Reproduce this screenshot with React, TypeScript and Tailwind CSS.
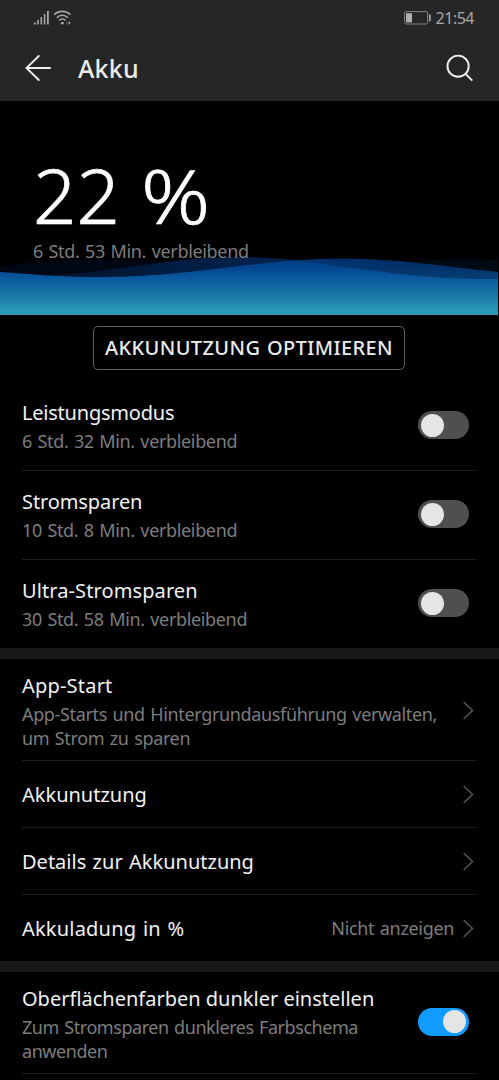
import React, { useState } from 'react';

interface SwitchProps {
  checked: boolean;
  onChange: () => void;
  label: string;
}

const Switch: React.FC<SwitchProps> = ({ checked, onChange, label }) => (
  <button
    type="button"
    role="switch"
    aria-checked={checked}
    aria-label={label}
    onClick={onChange}
    className={`flex h-7 w-[51px] shrink-0 items-center rounded-full px-[3px] ${
      checked ? 'justify-end bg-[#109cff]' : 'justify-start bg-[#4f4f4f]'
    }`}
  >
    <span className="size-[23px] rounded-full bg-[#e5e5e5]" />
  </button>
);

const Chevron: React.FC = () => (
  <svg className="h-[19px] w-3 shrink-0" viewBox="0 0 12 19" fill="none" stroke="#505050" strokeWidth="1.6">
    <path d="M1.7 1.2 L10.5 9.5 L1.7 17.8" />
  </svg>
);

const StatusBar: React.FC = () => (
  <div className="flex h-9 items-center justify-between pl-[33px] pr-[25px]">
    <div className="flex items-center gap-1 pb-px">
      <svg className="h-4 w-[17px]" viewBox="0 0 17 16" fill="#a8a8a8">
        <rect x="1" y="12.5" width="1.8" height="2" />
        <rect x="4.2" y="10" width="1.6" height="4.5" />
        <rect x="7.5" y="7" width="1.6" height="7.5" />
        <rect x="10.8" y="4" width="1.6" height="10.5" />
        <rect x="14" y="0.8" width="1.8" height="13.7" />
      </svg>
      <svg className="h-4 w-[18px]" viewBox="0 0 18 16" fill="none" stroke="#a8a8a8" strokeWidth="1.6">
        <path d="M0.2 4.8 C4.6 0.2 12 0.2 16.4 4.8" />
        <path d="M2.8 7.7 C6 4.5 10.6 4.5 13.8 7.7" />
        <path d="M5.2 10.4 C7.1 8.5 9.6 8.5 11.4 10.4" />
        <circle cx="8.3" cy="13.2" r="1.4" fill="#a8a8a8" stroke="none" />
        <path d="M13.3 11.4 L11.8 13 L13.3 14.6 Z" fill="#606060" stroke="none" />
        <path d="M14.6 11 L16.6 13 L14.6 15 Z" fill="#a8a8a8" stroke="none" />
      </svg>
    </div>
    <div className="flex items-center gap-[5px]">
      <svg className="h-[14px] w-[27px]" viewBox="0 0 27 14">
        <rect x="0.6" y="0.6" width="23" height="12.4" rx="1.6" fill="none" stroke="#858585" strokeWidth="1" />
        <rect x="2" y="2.2" width="6" height="9.2" fill="#b0b0b0" />
        <rect x="25" y="3.4" width="1.7" height="7" fill="#a8a8a8" />
      </svg>
      <span className="text-base leading-5 tracking-[-0.5px] text-[#a8a8a8]">21:54</span>
    </div>
  </div>
);

const Header: React.FC = () => (
  <header className="h-[101px] bg-[#262626]">
    <StatusBar />
    <div className="flex h-[65px] items-center px-[25px]">
      <svg className="mb-px h-[26px] w-[26px]" viewBox="0 0 26 26" fill="none" stroke="#f0f0f0" strokeWidth="1.8" strokeLinecap="round" strokeLinejoin="round">
        <path d="M13.8 1 L1.5 13 L13.8 25" />
        <path d="M1.5 13 H25.2" />
      </svg>
      <h1 className="ml-[27px] text-[25px] font-medium tracking-[0.2px] text-[#ececec]">Akku</h1>
      <svg className="mb-px ml-auto h-[28px] w-[28px]" viewBox="0 0 28 28" fill="none" stroke="#f0f0f0" strokeWidth="1.9">
        <circle cx="12.1" cy="12.2" r="10.6" />
        <path d="M19.4 19.6 L26.3 26.6" />
      </svg>
    </div>
  </header>
);

const BatteryLevel: React.FC = () => (
  <section className="relative h-[214px]">
    <svg className="absolute bottom-0 left-0 h-[60px] w-[498px]" viewBox="0 0 498 60">
      <defs>
        <linearGradient id="front" gradientUnits="userSpaceOnUse" x1="0" y1="0" x2="0" y2="60">
          <stop offset="0" stopColor="#003c82" />
          <stop offset="0.22" stopColor="#04468f" />
          <stop offset="0.4" stopColor="#0b5a9e" />
          <stop offset="0.7" stopColor="#1b7aa6" />
          <stop offset="0.93" stopColor="#2799b8" />
          <stop offset="1" stopColor="#3197b6" />
        </linearGradient>
        <linearGradient id="middle" gradientUnits="userSpaceOnUse" x1="50" y1="0" x2="300" y2="0">
          <stop offset="0" stopColor="#00132b" />
          <stop offset="0.5" stopColor="#001d42" />
          <stop offset="1" stopColor="#002352" />
        </linearGradient>
        <linearGradient id="shade" gradientUnits="userSpaceOnUse" x1="290" y1="0" x2="498" y2="0">
          <stop offset="0" stopColor="#001c44" stopOpacity="0.3" />
          <stop offset="0.5" stopColor="#001c44" stopOpacity="0.5" />
          <stop offset="1" stopColor="#001c38" stopOpacity="0.4" />
        </linearGradient>
      </defs>
      <path d="M0 12 C30 6 75 4 120 5 C170 6 200 10 240 20 H0 Z" fill="#000714" />
      <path d="M380 12 C410 5 450 3 498 5 V20 H380 Z" fill="#000a14" />
      <path d="M45 20.5 C120 17 170 2 235 2 C262 2 285 4 305 6 V22 H60 Z" fill="url(#middle)" />
      <path d="M0 17 C40 20 70 22 100 22 C190 22 260 3.8 340 3.8 C400 3.8 445 12 498 17 V60 H0 Z" fill="url(#front)" />
      <path d="M290 5.5 C306 4.2 323 3.8 340 3.8 C400 3.8 445 12 498 17 V24 C410 25 370 13 290 5.5 Z" fill="url(#shade)" />
    </svg>
    <div className="relative pl-[33px] pt-[55px]">
      <div className="flex text-[76px] font-light leading-[78px] text-white [-webkit-text-stroke:0.7px_#fff]">
        <span className="whitespace-pre">22 </span>
        <span className="ml-px origin-left scale-x-[1.12]">%</span>
      </div>
      <div className="mt-[3px] text-lg leading-7 tracking-[-0.33px] [word-spacing:1.2px] text-[#7d7d7d]">6 Std. 53 Min. verbleibend</div>
    </div>
  </section>
);

interface RowTextProps {
  title: string;
  description?: string;
  titleClass?: string;
  descriptionClass?: string;
}

const RowText: React.FC<RowTextProps> = ({ title, description, titleClass = '', descriptionClass = 'tracking-[-0.35px]' }) => (
  <div className="min-w-0 flex-1">
    <div className={`pt-px text-xl leading-7 text-[#f2f2f2] ${titleClass}`}>{title}</div>
    {description && (
      <div className={`mt-0.5 whitespace-pre-line text-lg leading-6 [word-spacing:1.2px] text-[#7d7d7d] ${descriptionClass}`}>
        {description}
      </div>
    )}
  </div>
);

const Band: React.FC = () => <div className="h-[11px] bg-[#171717]" />;

const MODES = [
  { id: 'performance', title: 'Leistungsmodus', description: '6 Std. 32 Min. verbleibend', titleClass: 'tracking-[-0.22px]' },
  { id: 'saving', title: 'Stromsparen', description: '10 Std. 8 Min. verbleibend', titleClass: 'tracking-[-0.1px]' },
  { id: 'ultra', title: 'Ultra-Stromsparen', description: '30 Std. 58 Min. verbleibend', titleClass: 'tracking-[0.1px]' },
];

const LINKS = [
  { title: 'Akkunutzung' },
  { title: 'Details zur Akkunutzung', titleClass: '[word-spacing:1.2px]' },
  { title: 'Akkuladung in %', value: 'Nicht anzeigen', titleClass: 'tracking-[0.2px] [word-spacing:1.3px]' },
];

export default function App() {
  const [mode, setMode] = useState<string | null>(null);
  const [darkColors, setDarkColors] = useState(true);

  return (
    <div className="h-[1080px] w-[499px] overflow-hidden bg-black font-['Noto_Sans',sans-serif]">
      <Header />
      <BatteryLevel />

      <div className="flex h-[66px] pl-[93px] pt-[11px]">
        <button type="button" className="h-[44px] w-[312px] whitespace-nowrap rounded-[5px] border border-[#606060] text-xl font-medium tracking-[0.4px] [word-spacing:1px] text-[#ececec]">
          AKKUNUTZUNG OPTIMIEREN
        </button>
      </div>

      <div className="px-[22px]">
        {MODES.map(item => (
          <div key={item.id} className="flex h-[89px] items-center border-t border-[#1c1c1c] pb-0.5 pr-[8px] first:border-transparent">
            <RowText title={item.title} description={item.description} titleClass={item.titleClass} />
            <Switch
              label={item.title}
              checked={mode === item.id}
              onChange={() => setMode(mode === item.id ? null : item.id)}
            />
          </div>
        ))}
      </div>

      <Band />

      <div className="px-[22px]">
        <div className="flex h-[101px] items-center pr-[3px] pt-px">
          <RowText
            title="App-Start"
            description={'App-Starts und Hintergrundausführung verwalten,\num Strom zu sparen'}
            titleClass="tracking-[0.2px]"
          />
          <Chevron />
        </div>
        {LINKS.map(link => (
          <div key={link.title} className="flex h-[67px] items-center border-t border-[#1c1c1c] pr-[3px]">
            <RowText title={link.title} titleClass={link.titleClass} />
            {link.value && <span className="mr-2 text-lg tracking-[-0.33px] [word-spacing:1.2px] text-[#7d7d7d]">{link.value}</span>}
            <Chevron />
          </div>
        ))}
      </div>

      <Band />

      <div className="mx-[22px] flex h-[102px] items-center border-b border-[#1c1c1c] pr-[8px] pt-px">
        <RowText
          title="Oberflächenfarben dunkler einstellen"
          description={'Zum Stromsparen dunkleres Farbschema\nanwenden'}
          descriptionClass="tracking-[-0.45px]"
        />
        <div className="pb-[3px]">
          <Switch label="Dunkle Farben" checked={darkColors} onChange={() => setDarkColors(!darkColors)} />
        </div>
      </div>
    </div>
  );
}
